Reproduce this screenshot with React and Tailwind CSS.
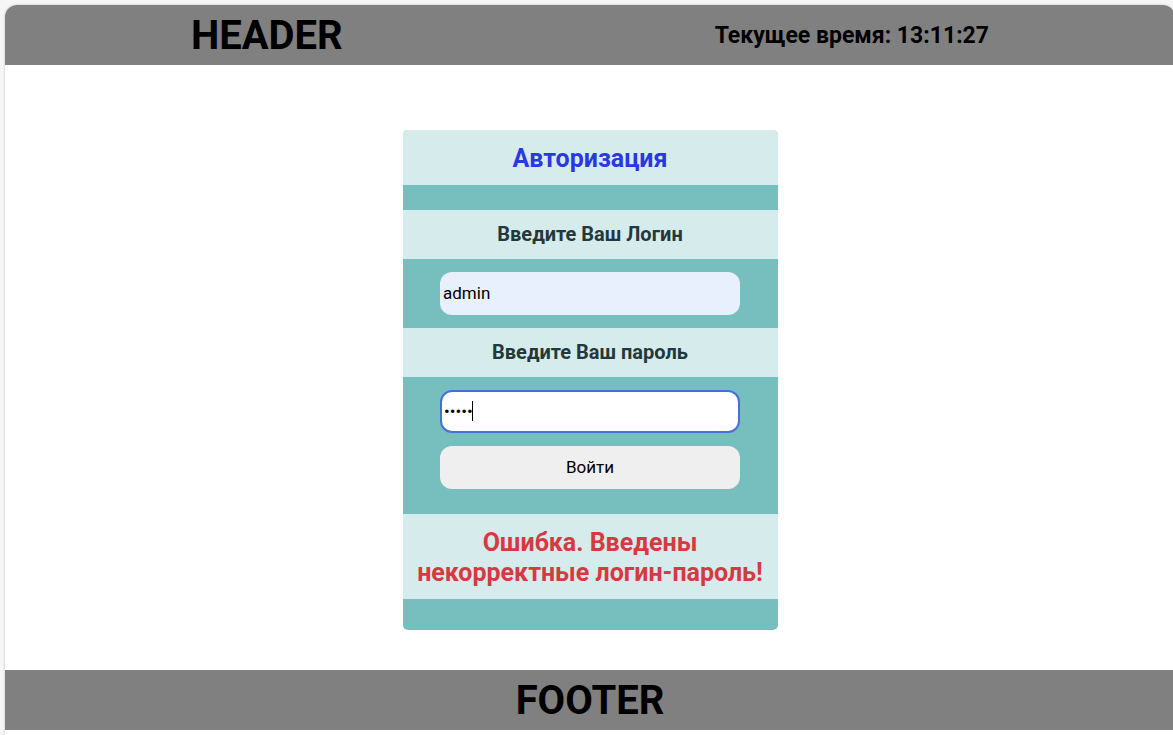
import { useState } from "react";

function Field({ id, label, children }) {
  return (
    <>
      <label
        htmlFor={id}
        className="block w-full bg-[#d6ebeb] pt-3 pb-3 text-center text-[20px] leading-[25px] font-bold text-[#23383b]"
      >
        {label}
      </label>
      <div className="relative mx-auto my-[13px] w-4/5">{children}</div>
    </>
  );
}

export default function App() {
  const [login, setLogin] = useState("admin");
  const [password, setPassword] = useState("admin");

  return (
    <div className="min-h-screen overflow-hidden bg-[#f6f6f6] pt-[5px] pl-[5px] font-['Roboto',sans-serif] text-black">
      <div className="-mr-[2px] flex min-h-[calc(100vh-5px)] flex-col rounded-t-[12px] bg-white pb-[5px] shadow-[0_0_3px_rgba(0,0,0,0.2)]">
        <header className="flex h-[60px] items-center justify-around rounded-t-[12px] bg-[#808080] pt-[2px]">
          <h1 className="text-[40px] leading-normal font-bold">HEADER</h1>
          <p className="text-[23px] leading-normal font-bold">Текущее время: 13:11:27</p>
        </header>

        <main className="flex grow items-start justify-center pt-[65px] pb-10">
          <form
            className="w-[375px] overflow-hidden rounded-[5px] bg-[#76bfbe] pb-[31px]"
            onSubmit={(e) => e.preventDefault()}
          >
            <h2 className="mb-[25px] bg-[#d6ebeb] pt-[14px] pb-[11px] text-center text-[25px] leading-[30px] font-bold text-[#2a38e2]">
              Авторизация
            </h2>

            <Field id="login" label="Введите Ваш Логин">
              <input
                id="login"
                type="text"
                value={login}
                onChange={(e) => setLogin(e.target.value)}
                className="block h-[43px] w-full rounded-[12px] bg-[#e8effd] px-[3px] pb-[2px] text-[17px] outline-none"
              />
            </Field>

            <Field id="password" label="Введите Ваш пароль">
              <input
                id="password"
                type="password"
                value={password}
                onChange={(e) => setPassword(e.target.value)}
                className="block h-[43px] w-full rounded-[12px] border-2 border-[#4571d6] bg-white px-[2px] pb-[2px] text-[17px] caret-transparent outline-none"
              />
              <span aria-hidden="true" className="absolute top-[11px] left-8 h-5 w-px bg-black" />
            </Field>

            <button
              type="submit"
              className="mx-auto mb-[25px] block h-[43px] w-4/5 rounded-[12px] bg-[#efefef] text-[17px]"
            >
              Войти
            </button>

            <p
              role="alert"
              className="bg-[#d6ebeb] pt-[14px] pb-[11px] text-center text-[25px] leading-[30px] font-bold text-[#d43a3f]"
            >
              Ошибка. Введены некорректные логин-пароль!
            </p>
          </form>
        </main>

        <footer className="flex h-[60px] items-center justify-center bg-[#808080] pt-[2px]">
          <p className="text-[40px] leading-normal font-bold">FOOTER</p>
        </footer>
      </div>
    </div>
  );
}
